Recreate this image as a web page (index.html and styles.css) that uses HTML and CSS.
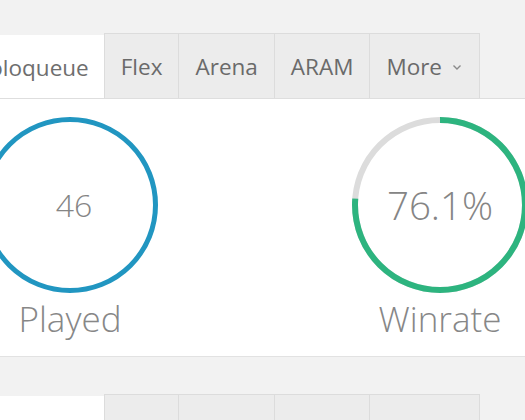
FILE: index.html
```html
<!DOCTYPE html>
<html lang="en">
<head>
<meta charset="utf-8">
<title>Stats</title>
<link rel="stylesheet" href="styles.css">
</head>
<body>
<div class="page">
  <section class="block">
    <nav class="tabs">
      <div class="tab active">Soloqueue</div>
      <div class="tab">Flex</div>
      <div class="tab">Arena</div>
      <div class="tab">ARAM</div>
      <div class="tab last">More <svg class="chev" width="10" height="7" viewBox="0 0 10 7"><polyline points="1.5,1.5 5,5 8.5,1.5" fill="none" stroke="#8a8a8a" stroke-width="1.4"/></svg></div>
    </nav>
    <div class="panel">
      <div class="stat">
        <div class="ring">
          <svg class="ring-svg" width="176" height="176" viewBox="0 0 176 176">
            <circle cx="88" cy="88" r="85.5" fill="none" stroke="#2196c1" stroke-width="5"/>
          </svg>
          <span class="value shift">46</span>
        </div>
        <div class="label">Played</div>
      </div>
      <div class="stat">
        <div class="ring">
          <svg class="ring-svg" width="176" height="176" viewBox="0 0 176 176">
            <circle cx="88" cy="88" r="85" fill="none" stroke="#dcdcdc" stroke-width="6"/>
            <circle cx="88" cy="88" r="85" fill="none" stroke="#2db47f" stroke-width="6" stroke-dasharray="406.4 534.1" transform="rotate(-90 88 88)"/>
          </svg>
          <span class="value big">76.1%</span>
        </div>
        <div class="label">Winrate</div>
      </div>
    </div>
  </section>
  <section class="block second">
    <nav class="tabs">
      <div class="tab active">Soloqueue</div>
      <div class="tab">Flex</div>
      <div class="tab">Arena</div>
      <div class="tab">ARAM</div>
      <div class="tab last">More <svg class="chev" width="10" height="7" viewBox="0 0 10 7"><polyline points="1.5,1.5 5,5 8.5,1.5" fill="none" stroke="#8a8a8a" stroke-width="1.4"/></svg></div>
    </nav>
  </section>
</div>
</body>
</html>
```

FILE: styles.css
```css
html, body {
  margin: 0;
  padding: 0;
  background: #f2f2f2;
  overflow: hidden;
  height: 420px;
}
.page {
  margin-left: -38px;
  width: 640px;
  padding-top: 33px;
  font-family: "Open Sans", "Noto Sans", sans-serif;
}
.block.second {
  margin-top: 37px;
}
.tabs {
  display: flex;
  height: 65px;
  border-bottom: 1px solid #dedede;
}
.tab {
  box-sizing: border-box;
  height: 65px;
  padding: 1px 16px 0 16px;
  display: flex;
  align-items: center;
  gap: 10px;
  font-size: 22.5px;
  color: #6a6a6a;
  background: #ececec;
  border-top: 1px solid #dcdcdc;
  border-left: 1px solid #dcdcdc;
}
.tab.active {
  background: #ffffff;
  color: #6e6e6e;
  border-top: 2px solid #f2f2f2;
  border-left: none;
  padding-left: 15px;
  padding-right: 15px;
}
.tab.last {
  border-right: 1px solid #dcdcdc;
  padding-right: 17px;
}
.chev {
  margin-top: 2px;
}
.panel {
  background: #ffffff;
  border-bottom: 1px solid #e2e2e2;
  height: 258px;
  box-sizing: border-box;
  padding: 18px 0 0 20px;
  display: flex;
  gap: 194px;
}
.stat {
  width: 176px;
  display: flex;
  flex-direction: column;
  align-items: center;
}
.ring {
  display: grid;
  place-items: center;
  width: 176px;
  height: 176px;
}
.ring-svg, .value {
  grid-area: 1 / 1;
}
.ring-svg {
  display: block;
}
.value {
  font-size: 32px;
  font-weight: 300;
  color: #858585;
  line-height: 1;
}
.value.shift {
  margin-left: 8px;
}
.value.big {
  font-size: 38.5px;
}
.label {
  margin-top: 4px;
  font-size: 35px;
  font-weight: 300;
  line-height: 44px;
  color: #878787;
}
```
